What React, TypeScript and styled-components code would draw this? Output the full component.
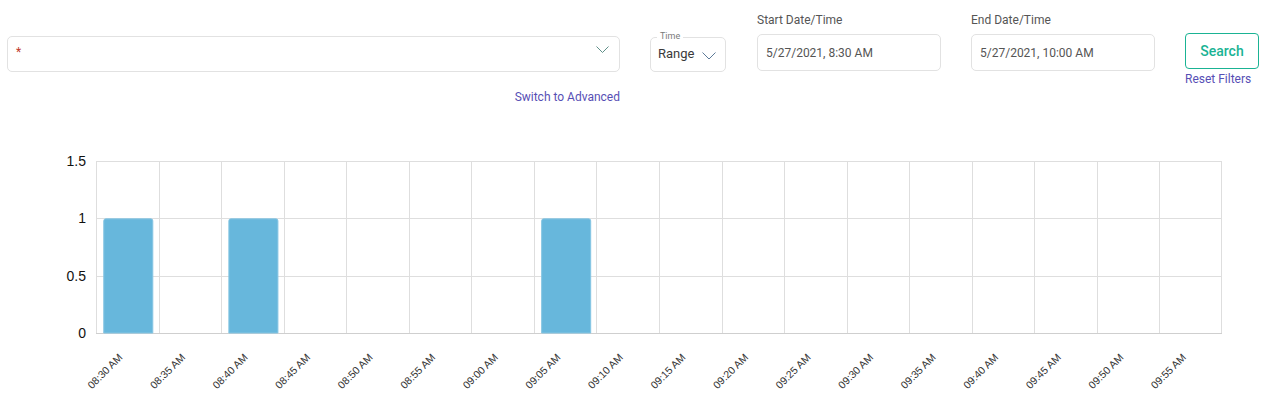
import React from 'react';
import styled, { createGlobalStyle } from 'styled-components';

const Global = createGlobalStyle`
  html, body { margin: 0; padding: 0; background: #fff; }
  body { font-family: Roboto, "Liberation Sans", Arial, sans-serif; }
`;

const Page = styled.div`
  width: 1274px;
  height: 397px;
  overflow: hidden;
  background: #fff;
`;

const Filters = styled.div`
  display: flex;
  align-items: flex-start;
  gap: 30px;
  padding-left: 7px;
  height: 140px;
  box-sizing: border-box;
`;

const Col = styled.div<{ $w: number; $top: number; $ml?: number }>`
  width: ${(p) => p.$w}px;
  padding-top: ${(p) => p.$top}px;
  margin-left: ${(p) => p.$ml || 0}px;
  display: flex;
  flex-direction: column;
  flex: none;
`;

const SelectBox = styled.div`
  height: 36px;
  box-sizing: border-box;
  border: 1px solid #e2e2e2;
  border-radius: 5px;
  display: flex;
  align-items: flex-start;
  justify-content: space-between;
  padding: 8px 10px 0 8px;
`;

const Required = styled.span`
  color: #c0392b;
  font-size: 12px;
  line-height: 14px;
`;

const Chevron = styled.svg<{ $mt: number }>`
  margin-top: ${(p) => p.$mt}px;
  flex: none;
`;

const Link = styled.a<{ $mt: number; $align: string }>`
  margin-top: ${(p) => p.$mt}px;
  align-self: ${(p) => p.$align};
  font-size: 12px;
  line-height: 14px;
  color: #574fb5;
  text-decoration: none;
  white-space: nowrap;
  cursor: pointer;
`;

const Outlined = styled.div`
  position: relative;
  height: 35px;
  box-sizing: border-box;
  border: 1px solid #e2e2e2;
  border-radius: 5px;
  display: flex;
  align-items: center;
  justify-content: space-between;
  padding: 0 9px 3px 7px;
`;

const Legend = styled.span`
  position: absolute;
  top: -7px;
  left: 6px;
  padding: 0 3px;
  background: #fff;
  font-size: 9px;
  line-height: 11px;
  color: #7a7a7a;
`;

const Value = styled.span`
  font-size: 13px;
  color: #3a3a3a;
`;

const Label = styled.div`
  font-size: 12px;
  line-height: 16px;
  color: #555;
  white-space: nowrap;
`;

const Input = styled.div`
  margin-top: 6px;
  height: 37px;
  box-sizing: border-box;
  border: 1px solid #e2e2e2;
  border-radius: 5px;
  display: flex;
  align-items: center;
  padding-left: 8px;
  font-size: 12px;
  color: #555;
  white-space: nowrap;
`;

const SearchButton = styled.button`
  height: 36px;
  box-sizing: border-box;
  border: 1px solid #1ab394;
  border-radius: 4px;
  background: #fff;
  color: #1ab394;
  font-family: Roboto, "Liberation Sans", sans-serif;
  font-size: 14px;
  font-weight: 500;
  padding: 0;
  cursor: pointer;
`;

const ChartSvg = styled.svg`
  display: block;
`;

const L = 96;
const R = 1222;
const T = 161;
const B = 333;
const OFF = 140;
const labels = [
  '08:30 AM', '08:35 AM', '08:40 AM', '08:45 AM', '08:50 AM', '08:55 AM',
  '09:00 AM', '09:05 AM', '09:10 AM', '09:15 AM', '09:20 AM', '09:25 AM',
  '09:30 AM', '09:35 AM', '09:40 AM', '09:45 AM', '09:50 AM', '09:55 AM',
];
const values = [1, 0, 1, 0, 0, 0, 0, 1, 0, 0, 0, 0, 0, 0, 0, 0, 0, 0];

function Chart() {
  const cw = (R - L) / labels.length;
  const yOf = (v: number) => B - ((B - T) * v) / 1.5;
  return (
    <ChartSvg width={1274} height={257} viewBox={`0 ${OFF} 1274 257`}>
      {[0, 0.5, 1, 1.5].map((v) => (
        <g key={v}>
          <line x1={L} x2={R} y1={Math.round(yOf(v)) + 0.5} y2={Math.round(yOf(v)) + 0.5} stroke={v === 0 ? '#cfcfcf' : '#dedede'} />
          <text x={86} y={yOf(v) + 5} textAnchor="end" fontSize={14} fill="#111" fontFamily='"Liberation Sans", Arial, sans-serif'>
            {String(v)}
          </text>
        </g>
      ))}
      {labels.map((_, i) => (
        <line key={'v' + i} x1={Math.round(L + i * cw) + 0.5} x2={Math.round(L + i * cw) + 0.5} y1={T} y2={B} stroke="#dedede" />
      ))}
      <line x1={R - 0.5} x2={R - 0.5} y1={T} y2={B} stroke="#dedede" />
      {values.map((v, i) =>
        v > 0 ? (
          <path
            key={'b' + i}
            d={`M${L + i * cw + cw * 0.1 + 1.5},${B} V${yOf(v) + 2.5} q0,-2 2,-2 H${L + i * cw + cw * 0.9 - 1.5} q2,0 2,2 V${B} Z`}
            fill="#67b7dc"
            stroke="#86c5e3"
            strokeWidth={1}
          />
        ) : null
      )}
      {labels.map((t, i) => {
        const cx = L + i * cw + cw / 2 - 4;
        const cy = B + 25;
        return (
          <text
            key={'l' + i}
            x={cx}
            y={cy}
            textAnchor="end"
            fontSize={10.5}
            fill="#333"
            fontFamily='"Liberation Sans", Arial, sans-serif'
            transform={`rotate(-45 ${cx} ${cy})`}
          >
            {t}
          </text>
        );
      })}
    </ChartSvg>
  );
}

export default function App() {
  return (
    <Page>
      <Global />
      <Filters>
        <Col $w={613} $top={36}>
          <SelectBox>
            <Required>*</Required>
            <Chevron $mt={1} width="13" height="8" viewBox="0 0 13 8">
              <path d="M0.5 0.5 L6.5 6.5 L12.5 0.5" fill="none" stroke="#5f8f88" strokeWidth="1" />
            </Chevron>
          </SelectBox>
          <Link $mt={18} $align="flex-end">Switch to Advanced</Link>
        </Col>
        <Col $w={76} $top={37}>
          <Outlined>
            <Legend>Time</Legend>
            <Value>Range</Value>
            <Chevron $mt={5} width="14" height="8" viewBox="0 0 14 8">
              <path d="M0.5 0.5 L7 7 L13.5 0.5" fill="none" stroke="#5d7a98" strokeWidth="1" />
            </Chevron>
          </Outlined>
        </Col>
        <Col $w={184} $top={12} $ml={1}>
          <Label>Start Date/Time</Label>
          <Input>5/27/2021, 8:30 AM</Input>
        </Col>
        <Col $w={184} $top={12}>
          <Label>End Date/Time</Label>
          <Input>5/27/2021, 10:00 AM</Input>
        </Col>
        <Col $w={74} $top={33}>
          <SearchButton>Search</SearchButton>
          <Link $mt={3} $align="flex-start">Reset Filters</Link>
        </Col>
      </Filters>
      <Chart />
    </Page>
  );
}
